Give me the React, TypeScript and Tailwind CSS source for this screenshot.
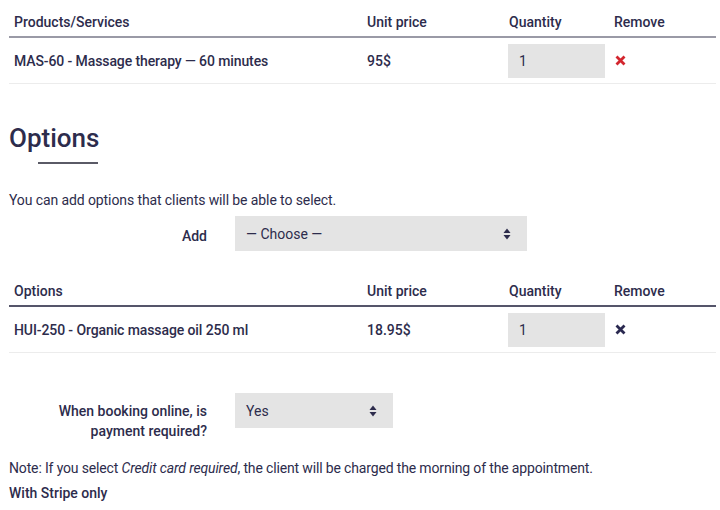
import React from "react"

const text = "text-[#2d2c4c]"

const Arrows = () => (
  <svg width="8" height="12" viewBox="0 0 8 12" className="text-[#2d2c4c]">
    <path d="M4 0.5 L7.5 5 H0.5 Z" fill="currentColor" />
    <path d="M4 11.5 L7.5 7 H0.5 Z" fill="currentColor" />
  </svg>
)

const Cross = ({ color }: { color: string }) => (
  <svg width="11" height="11" viewBox="0 0 11 11">
    <path d="M1.5 1.5 L9.5 9.5 M9.5 1.5 L1.5 9.5" stroke={color} strokeWidth="2.8" strokeLinecap="butt" />
  </svg>
)

type Line = { name: string; price: string; qty: string; cross: string }

const ItemTable = ({ title, row, border }: { title: string; row: Line; border: string }) => (
  <div className="ml-[9px] w-[707px]">
    <div className={`grid grid-cols-[353px_141px_106px_1fr] h-[38px] items-end pb-[4px] border-b-2 ${border} font-medium`}>
      <div className="pl-[5px]">{title}</div>
      <div className="pl-[5px]">Unit price</div>
      <div className="pl-[6px]">Quantity</div>
      <div className="pl-[5px]">Remove</div>
    </div>
    <div className="grid grid-cols-[353px_141px_106px_1fr] items-center h-[46px] border-b border-[#ececec] font-medium">
      <div className="pl-[5px] tracking-[-0.1px]">{row.name}</div>
      <div className="pl-[5px]">{row.price}</div>
      <div className="pl-[5px]">
        <div className="w-[97px] h-[34px] bg-[#e4e4e4] flex items-center pl-[11px] font-normal">{row.qty}</div>
      </div>
      <div className="pl-[6px] flex items-center">
        <Cross color={row.cross} />
      </div>
    </div>
  </div>
)

const Select = ({ value, width }: { value: string; width: string }) => (
  <div className={`${width} h-[35px] bg-[#e4e4e4] flex items-center justify-between pl-[11px] pr-[16px]`}>
    <span>{value}</span>
    <Arrows />
  </div>
)

export default function App() {
  return (
    <div className={`w-[720px] h-[510px] bg-white text-[14px] leading-[20px] ${text} overflow-hidden`} style={{ fontFamily: "Roboto, 'Liberation Sans', sans-serif" }}>
      <ItemTable
        title="Products/Services"
        border="border-[#9a9aa6]"
        row={{ name: "MAS-60 - Massage therapy — 60 minutes", price: "95$", qty: "1", cross: "#d3262e" }}
      />

      <h2 className="ml-[9px] mt-[38px] text-[26px] leading-[32px] font-medium">Options</h2>
      <div className="ml-[38px] mt-[8px] w-[60px] h-[2px] bg-[#5a5a66]" />

      <p className="ml-[9px] mt-[26px] tracking-[-0.1px]">You can add options that clients will be able to select.</p>

      <div className="flex items-center mt-[6px]">
        <div className="w-[207px] text-right font-medium pt-[4px]">Add</div>
        <div className="ml-[28px]">
          <Select value="— Choose —" width="w-[292px]" />
        </div>
      </div>

      <div className="mt-[18px]">
        <ItemTable
          title="Options"
          border="border-[#55556a]"
          row={{ name: "HUI-250 - Organic massage oil 250 ml", price: "18.95$", qty: "1", cross: "#2a2950" }}
        />
      </div>

      <div className="flex items-start mt-[40px]">
        <div className="w-[207px] text-right font-medium pt-[8px] pl-[44px]">When booking online, is payment required?</div>
        <div className="ml-[28px]">
          <Select value="Yes" width="w-[158px]" />
        </div>
      </div>

      <p className="ml-[9px] mt-[17px] tracking-[-0.15px]">
        Note: If you select <em>Credit card required</em>, the client will be charged the morning of the appointment.
      </p>
      <p className="ml-[9px] mt-[5px] font-medium">With Stripe only</p>
    </div>
  )
}
